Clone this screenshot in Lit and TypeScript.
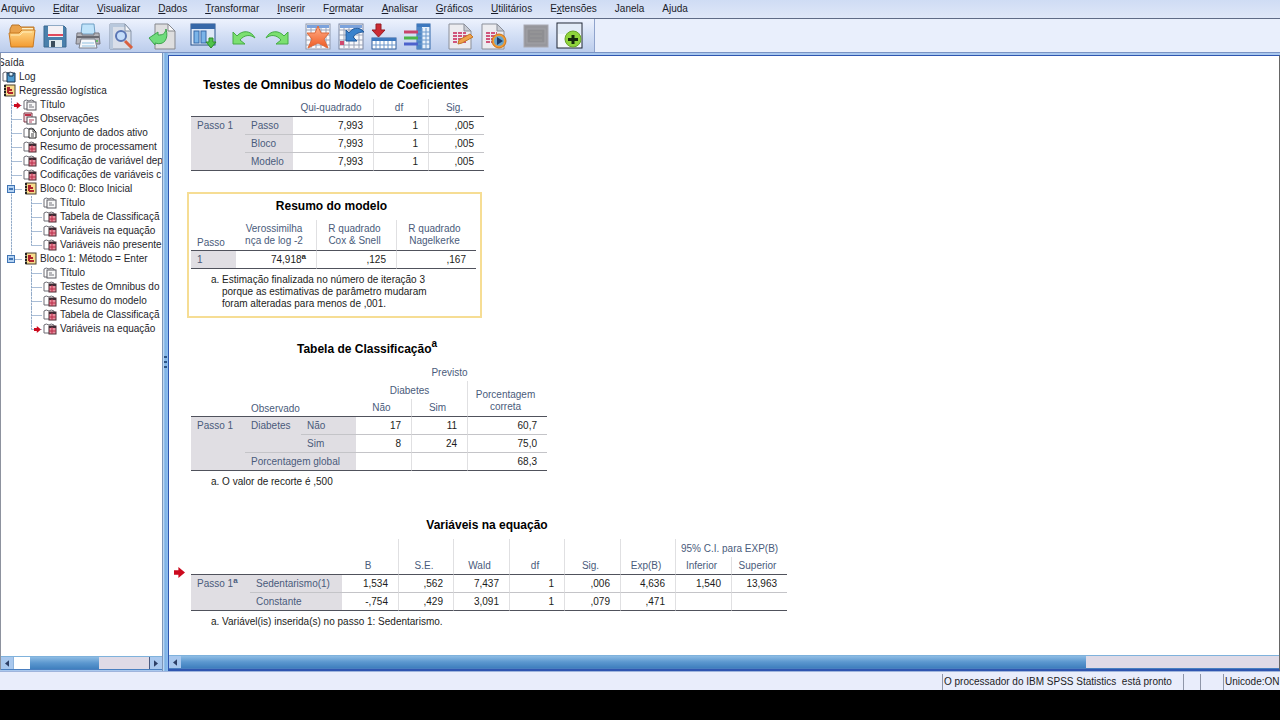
import { LitElement, html, svg, css, nothing } from "lit";
import { customElement } from "lit/decorators.js";

type IconName =
  | "open" | "save" | "print" | "preview" | "import" | "dialogs" | "undo" | "redo"
  | "star" | "goto" | "insert" | "vars" | "report" | "run" | "grey" | "plus";

const page = svg`<path d="M3 2H18L25 9V27H3Z" fill="#ececf0" stroke="#8b8f99"/><path d="M18 2V9H25Z" fill="#c9ccd4" stroke="#8b8f99"/>`;
const sheetLines = svg`<path d="M2 8H26M2 13H26M2 18H26M2 23H26M7 3V26M12 3V26M17 3V26M22 3V26" stroke="#9aa3b8" fill="none"/>`;

const icons: Record<IconName, unknown> = {
  open: svg`<path d="M2 7L4 3H11L13 5H26V12H2Z" fill="#e9a24b" stroke="#b8752b"/><path d="M14 6H25V9H14Z" fill="#fff3c9"/>
    <path d="M1 11H11L14 8H27L25 25H3Z" fill="url(#gFolder)" stroke="#c97a22"/><path d="M3 13H12L15 10H24" stroke="#ffe9b4" fill="none"/>`,
  save: svg`<path d="M3 4H23L25 6V25H3Z" fill="#4a80ac" stroke="#3b6890"/><rect x="7" y="4" width="15" height="11" fill="#f4f1f5"/>
    <path d="M7 13H22" stroke="#e04a5c" stroke-width="2"/><rect x="8" y="18" width="13" height="7" fill="#dfe9ee"/><rect x="10" y="19" width="4" height="6" fill="#3a4d5c"/>`,
  print: svg`<path d="M8 2H20L21 12H7Z" fill="#bfe3fa" stroke="#6f9fc4"/><path d="M3 11H8V13H20V11H25L26 22H2Z" fill="#b4b4ba" stroke="#76767e"/>
    <path d="M3 15H25" stroke="#6a6a72" stroke-width="2"/><path d="M7 17H21L23 26H5Z" fill="#f6f8fb" stroke="#7a808c"/><path d="M8 21H20M8 24H21" stroke="#8fbfe0" fill="none"/><circle cx="23" cy="19" r="1" fill="#4dc04d"/>`,
  preview: svg`<path d="M3 2H18L24 9V27H3Z" fill="#d9dfe9" stroke="#8694a8"/><path d="M3 2H18V5H6V27H3Z" fill="#b8c8dc"/><path d="M18 2V9H24Z" fill="#f4f6fa" stroke="#8694a8"/>
    <path d="M18 19L25 26" stroke="#d9603f" stroke-width="3"/><circle cx="14" cy="14" r="5" fill="#c3dcfa" stroke="#5a76b4" stroke-width="2"/>`,
  import: svg`<path d="M7 2H20L27 9V27H7Z" fill="#dededf" stroke="#85878d"/><path d="M20 2V9H27Z" fill="#f9f9fa" stroke="#85878d"/>
    <path d="M18 7C17 12 15 13 10 13V10L1 16L7 23V21C16 24 21 17 18 7Z" fill="#6fdc7c" stroke="#3ca34c"/>`,
  dialogs: svg`<rect x="2" y="2" width="24" height="21" fill="#dfe9f7" stroke="#27508a"/><rect x="2" y="2" width="24" height="5" fill="#3768a8"/>
    <rect x="5" y="9" width="5" height="12" fill="#7ab4e8" stroke="#3768a8"/><rect x="12" y="9" width="5" height="12" fill="#7ab4e8" stroke="#3768a8"/>
    <path d="M20 16H24V20H27L22 26L17 20H20Z" fill="#4fc34a" stroke="#2c8a2b"/>`,
  undo: svg`<path d="M3 10V22H15L10 18C14 13 20 12 25 16C21 8 12 8 7 14Z" fill="#7be070" stroke="#46ab46"/>`,
  redo: svg`<path d="M25 10V22H13L18 18C14 13 8 12 3 16C7 8 16 8 21 14Z" fill="#7be070" stroke="#46ab46"/>`,
  star: svg`<rect x="2" y="2" width="24" height="25" fill="#f8f8fb" stroke="#8e97ac"/>${sheetLines}<rect x="3" y="3" width="22" height="3" fill="#7ba2dc"/>
    <path d="M14 4L17 11H25L20 17L24 26L14 21L4 26L8 17L3 11H11Z" fill="url(#gStar)" stroke="#df6a3a"/>`,
  goto: svg`<rect x="2" y="2" width="24" height="25" fill="#f8f8fb" stroke="#7c87a2"/>${sheetLines}<rect x="3" y="3" width="22" height="3" fill="#7ba2dc"/><rect x="3" y="19" width="4" height="4" fill="#d0486e"/>
    <path d="M9 8V19H20L16 15C19 11 23 10 27 10C22 4 15 6 12 11Z" fill="#3b82cc" stroke="#235a9c"/>`,
  insert: svg`<rect x="2" y="16" width="24" height="11" fill="#fff" stroke="#2f5c9a"/><rect x="2" y="16" width="24" height="3" fill="#3d78be"/><path d="M2 23H26M6 19V27M10 19V27M14 19V27M18 19V27M22 19V27" stroke="#6d97cb"/>
    <path d="M6 2H11V8H15L8.500 15L2 8H6Z" fill="#cc2a33" stroke="#961c24"/>`,
  vars: svg`<rect x="14" y="2" width="13" height="25" fill="#e8f1fb" stroke="#2c65a8"/><rect x="14" y="2" width="13" height="3" fill="#3d78be"/><rect x="14" y="5" width="5" height="22" fill="#4d86c6"/><path d="M15 10H27M15 14H27M15 18H27M15 22H27M19 6V27M23 6V27" stroke="#6d9acd"/>
    <path d="M1 10H15" stroke="#c8446b" stroke-width="3"/><path d="M1 16H15" stroke="#4cb449" stroke-width="3"/><path d="M1 22H15" stroke="#4c62cc" stroke-width="3"/>`,
  report: svg`${page}<path d="M7 11H20M7 14H21M7 17H18M7 20H20" stroke="#d0557c" stroke-width="2" stroke-dasharray="4 1"/><path d="M13 18L24 12L27 15L16 21L12 22Z" fill="#f0a24a" stroke="#c27424"/>`,
  run: svg`${page}<path d="M7 11H18M7 14H16M7 17H14M7 20H13" stroke="#d0557c" stroke-width="2" stroke-dasharray="4 1"/><circle cx="20" cy="19" r="7" fill="#f09a34" stroke="#cc7416"/><circle cx="20" cy="19" r="5" fill="#6aa6cc"/><path d="M18 15L24 19L18 23Z" fill="#1e3f6c"/>`,
  grey: svg`<rect x="2" y="3" width="24" height="22" fill="#97979c" stroke="#a9a9b2"/><rect x="5" y="7" width="18" height="14" fill="#8e8e92" stroke="#a2a2a6"/><path d="M8 10H20M8 14H20M8 18H20" stroke="#999"/>`,
  plus: svg`<rect x="2" y="1" width="25" height="25" fill="#f3f7fc" stroke="#1c2434"/><rect x="3" y="2" width="23" height="10" fill="#e3ecf7"/>
    <circle cx="18" cy="17" r="8" fill="#8fd43c" stroke="#6aa52b"/><path d="M18 13V22M13 17.500H23" stroke="#14280c" stroke-width="3"/>`,
};

const toolGroups: { spaced?: boolean; items: [IconName, string][] }[] = [
  { items: [["open", "Abrir"], ["save", "Salvar"], ["print", "Imprimir"], ["preview", "Visualizar impressão"]] },
  { items: [["import", "Exportar"]] },
  { items: [["dialogs", "Diálogos recentes"]] },
  { items: [["undo", "Desfazer"], ["redo", "Refazer"]] },
  { items: [["star", "Ir para dados"], ["goto", "Ir para caso"], ["insert", "Ir para variável"], ["vars", "Variáveis"]] },
  { spaced: true, items: [["report", "Editar saída"], ["run", "Executar"]] },
  { spaced: true, items: [["grey", "Designar janela"], ["plus", "Adicionar"]] },
];

type TreeIcon = "log" | "book" | "title" | "notes" | "data" | "table";

const backBook = svg`<path d="M1 11V3Q3 1 6 3Q8 1 11 3V11Z" fill="#fff" stroke="#6c6c74"/>`;
const treeIcons: Record<TreeIcon, unknown> = {
  log: svg`${backBook}<path d="M5 3H13V12H5Z" fill="#4f9cd0" stroke="#14304c"/><path d="M7 3V6H11V3" fill="#d8eefa" stroke="#14304c"/>`,
  book: svg`<rect x="3" y="1" width="10" height="11" fill="#f8dc8c" stroke="#4a4030"/><path d="M3 1V12" stroke="#222" stroke-width="2" stroke-dasharray="2 1"/><path d="M5 4H8M6 4V9M6 6H10M6 9H11" fill="none" stroke="#b0242c" stroke-width="2"/>`,
  title: svg`${backBook}<rect x="4" y="4" width="9" height="8" fill="#f8f8f8" stroke="#5c5c64"/><path d="M6 7H9M6 9H11" stroke="#77777f"/>`,
  notes: svg`<path d="M1 10V1H9V10Z" fill="#f7dfe4" stroke="#7c3444"/><path d="M2 3H8" stroke="#c03048" stroke-width="2"/><rect x="4" y="5" width="9" height="7" fill="#fff" stroke="#4c4c54"/><path d="M6 8H11M6 10H9" stroke="#b0405c"/>`,
  data: svg`${backBook}<path d="M6 3H10L13 6V12H6Z" fill="#fff" stroke="#222"/><path d="M10 3V6H13M8 8H11M8 10H11" stroke="#444" fill="none"/>`,
  table: svg`${backBook}<rect x="6" y="4" width="7" height="8" fill="#e88c9c" stroke="#4c2c34"/><path d="M6 5H13" stroke="#3c2c34" stroke-width="2"/><path d="M9 5V12M6 9H13" stroke="#b82c48"/>`,
};

interface Node { label: string; icon: TreeIcon; current?: boolean; children?: Node[] }

const tree: Node[] = [
  { label: "Título", icon: "title", current: true },
  { label: "Observações", icon: "notes" },
  { label: "Conjunto de dados ativo", icon: "data" },
  { label: "Resumo de processament", icon: "table" },
  { label: "Codificação de variável dep", icon: "table" },
  { label: "Codificações de variáveis c", icon: "table" },
  {
    label: "Bloco 0: Bloco Inicial", icon: "book", children: [
      { label: "Título", icon: "title" },
      { label: "Tabela de Classificaçã", icon: "table" },
      { label: "Variáveis na equação", icon: "table" },
      { label: "Variáveis não presente", icon: "table" },
    ],
  },
  {
    label: "Bloco 1: Método = Enter", icon: "book", children: [
      { label: "Título", icon: "title" },
      { label: "Testes de Omnibus do", icon: "table" },
      { label: "Resumo do modelo", icon: "table" },
      { label: "Tabela de Classificaçã", icon: "table" },
      { label: "Variáveis na equação", icon: "table", current: true },
    ],
  },
];

const arrow = html`<svg class="arrow" viewBox="0 0 10 10" aria-hidden="true"><path d="M0 3H4V0L10 5L4 10V7H0Z" fill="#cc0a1e"/></svg>`;

@customElement("spss-menu")
class SpssMenu extends LitElement {
  static styles = css`
    :host { display: block; background: linear-gradient(#cfdcf4, #dfe7f8); border-bottom: 1px solid #5f6b86; }
    nav { display: flex; gap: 18px; padding: 0 1px; height: 18px; align-items: center; }
    button { all: unset; font: 10px/16px "Liberation Sans", sans-serif; color: #1a1c2a; white-space: nowrap; }
  `;
  // The "_" sign stands before the access key of each entry.
  entries = ["Arquivo", "_Editar", "_Visualizar", "_Dados", "_Transformar", "_Inserir", "F_ormatar", "_Analisar", "_Gráficos", "_Utilitários", "E_xtensões", "Janela", "Ajuda"];
  render() {
    return html`<nav>${this.entries.map((e) => {
      const i = e.indexOf("_");
      return html`<button>${i < 0 ? e : html`${e.slice(0, i)}<u>${e[i + 1]}</u>${e.slice(i + 2)}`}</button>`;
    })}</nav>`;
  }
}

@customElement("spss-toolbar")
class SpssToolbar extends LitElement {
  static styles = css`
    :host { display: flex; background: #e9effc; border-bottom: 1px solid #7a93c4; }
    .bar { display: flex; gap: 13px; padding: 3px 11px 2px 8px; background: linear-gradient(#edf2fd, #d3dff5 50%, #bccdec); border-right: 1px solid #8fa3cc; }
    .group { display: flex; gap: 5px; }
    .spaced { margin-left: 2px; }
    button { all: unset; width: 28px; height: 28px; }
    svg { display: block; width: 28px; height: 28px; }
  `;
  render() {
    return html`<div class="bar" role="toolbar">
      ${toolGroups.map((g) => html`<div class="group ${g.spaced ? "spaced" : ""}">
        ${g.items.map(([name, label]) => html`<button aria-label=${label}><svg viewBox="0 0 28 28">
          <defs>
            <linearGradient id="gFolder" x2="0" y2="1"><stop offset="0" stop-color="#ffd98a"/><stop offset="1" stop-color="#f39a30"/></linearGradient>
            <linearGradient id="gStar" x2="0" y2="1"><stop offset="0" stop-color="#ffb08c"/><stop offset="1" stop-color="#ef5a22"/></linearGradient>
          </defs>${icons[name]}</svg></button>`)}
      </div>`)}
    </div>`;
  }
}

@customElement("spss-scrollbar")
class SpssScrollbar extends LitElement {
  static properties = { kind: { type: String } };
  declare kind: string;
  static styles = css`
    :host { display: block; }
    .bar { display: flex; height: 12px; background: #dfdae6; border-top: 1px solid #7fb2dc; border-bottom: 1px solid #4a7fc0; }
    button { all: unset; width: 12px; display: flex; align-items: center; justify-content: center; background: #a9c8ee; }
    svg { width: 4px; height: 7px; }
    .thumb { background: linear-gradient(#8dbce4, #5b97cf 50%, #3f7fbe); }
    .side .rest { background: #fff; flex: 0 0 16px; border-left: 1px solid #8fb4dc; }
    .side .thumb { flex: 68; }
    .side .track { flex: 50; border-right: 1px solid #4a5a80; }
    .main .thumb { flex: 904; }
    .main .track { flex: 193; }
  `;
  render() {
    const side = this.kind === "side";
    return html`<div class="bar ${this.kind}">
      <button aria-label="Rolar para a esquerda"><svg viewBox="0 0 5 8"><path d="M5 0V8L0 4Z" fill="#2d3f66"/></svg></button>
      ${side ? html`<div class="rest"></div>` : nothing}
      <div class="thumb"></div><div class="track"></div>
      ${side ? html`<button aria-label="Rolar para a direita"><svg viewBox="0 0 5 8"><path d="M0 0V8L5 4Z" fill="#2d3f66"/></svg></button>` : nothing}
    </div>`;
  }
}

@customElement("spss-outline")
class SpssOutline extends LitElement {
  static styles = css`
    :host { display: flex; flex-direction: column; overflow: hidden; background: #fff; font: 10px/14px "Liberation Sans", sans-serif; color: #26262c; }
    .tree { flex: 1; min-height: 0; overflow: hidden; white-space: nowrap; padding-top: 3px; }
    .root { margin-left: -3px; }
    ul { list-style: none; margin: 0; padding: 0; }
    ul ul { padding-left: 20px; }
    .row { display: flex; align-items: center; gap: 2px; height: 14px; }
    .top { padding-left: 1px; }
    .branch > li {
      background: repeating-linear-gradient(#93abc8 0 2px, #d3dfec 2px 3px) 10px 0 / 1px 100% no-repeat,
        linear-gradient(#a9bdd6, #a9bdd6) 10px 7px / 11px 1px no-repeat;
    }
    .branch > li:last-child { background-size: 1px 7px, 11px 1px; }
    .gutter { flex: 0 0 20px; display: flex; justify-content: flex-end; }
    .gutter.toggle { justify-content: center; }
    .icon { flex: none; width: 15px; height: 14px; }
    .arrow { width: 7px; height: 7px; }
    button { all: unset; box-sizing: border-box; width: 8px; height: 8px; border: 1px solid #3f74b4; background: linear-gradient(#3f74b4, #3f74b4) 1px 2px / 4px 2px no-repeat #b4d2f2; }
  `;
  row(n: Node): unknown {
    return html`<li>
      <div class="row">
        <span class="gutter ${n.children ? "toggle" : ""}">${n.children ? html`<button aria-label="Recolher"></button>` : n.current ? arrow : nothing}</span>
        <svg class="icon" viewBox="0 0 15 14">${treeIcons[n.icon]}</svg><span>${n.label}</span>
      </div>
      ${n.children ? html`<ul class="branch">${n.children.map((c) => this.row(c))}</ul>` : nothing}
    </li>`;
  }
  render() {
    return html`<div class="tree">
        <div class="row root">Saída</div>
        <div class="row top"><svg class="icon" viewBox="0 0 15 14">${treeIcons.log}</svg><span>Log</span></div>
        <div class="row top"><svg class="icon" viewBox="0 0 15 14">${treeIcons.book}</svg><span>Regressão logística</span></div>
        <ul class="branch">${tree.map((n) => this.row(n))}</ul>
      </div>
      <spss-scrollbar kind="side"></spss-scrollbar>`;
  }
}

@customElement("spss-output")
class SpssOutput extends LitElement {
  static styles = css`
    :host { display: flex; flex-direction: column; overflow: hidden; background: #fff; font: 10px/12px "Liberation Sans", sans-serif; color: #1c1c20; }
    .doc { flex: 1; min-height: 0; overflow: hidden; display: flex; flex-direction: column; gap: 15px; align-items: flex-start; padding: 15px 5px 0; }
    .item { display: grid; grid-template-columns: 13px auto; align-items: center; }
    .spaced { margin-top: 2px; }
    .arrow { width: 11px; height: 11px; }
    figure { grid-column: 2; margin: 0; border: 2px solid transparent; padding: 4px 4px 4px 2px; }
    .selected { border-color: #f6dd94; padding-bottom: 6px; }
    figcaption { font-size: 12px; line-height: 16px; font-weight: bold; text-align: center; color: #000; margin-bottom: 6px; padding-right: 4px; }
    sup { font-size: 8px; line-height: 0; font-weight: bold; vertical-align: 4px; }
    figcaption sup { font-size: 10px; vertical-align: 6px; }
    table { border-collapse: separate; border-spacing: 0; table-layout: fixed; width: 1px; }
    th, td { box-sizing: border-box; height: 18px; padding: 1px 10px 0 6px; white-space: nowrap; line-height: 16px; border-bottom: 1px solid #c4c4c8; vertical-align: top; }
    td { text-align: right; }
    td + td, .v { border-left: 1px solid #e0e0e2; }
    th { font-weight: normal; color: #4a5b7b; text-align: left; }
    thead th { padding: 0 4px 0 0; text-align: center; vertical-align: bottom; border-bottom: 0; }
    thead .wrap { line-height: 12px; padding-bottom: 3px; }
    thead .l { text-align: left; padding-left: 6px; line-height: 14px; }
    thead .end { border-bottom: 1px solid #50525c; }
    tbody th { background: #e0dee3; }
    tbody tr:last-child > *, tbody .last { border-bottom-color: #50525c; }
    p { margin: 5px 0 0 31px; text-indent: -11px; }
    .w45 { width: 45px } .w48 { width: 48px } .w54 { width: 54px } .w55 { width: 55px } .w56 { width: 56px } .w59 { width: 59px } .w80 { width: 80px } .w92 { width: 92px }
    .model { height: 31px; }
  `;
  render() {
    return html`<div class="doc">
      <div class="item"><figure>
        <figcaption>Testes de Omnibus do Modelo de Coeficientes</figcaption>
        <table>
          <colgroup><col class="w54"><col class="w48"><col class="w80"><col class="w55"><col class="w56"></colgroup>
          <thead><tr><th class="end" colspan="2"></th><th class="end">Qui-quadrado</th><th class="end v">df</th><th class="end v">Sig.</th></tr></thead>
          <tbody>
            <tr><th class="last" rowspan="3">Passo 1</th><th>Passo</th><td>7,993</td><td>1</td><td>,005</td></tr>
            <tr><th>Bloco</th><td>7,993</td><td>1</td><td>,005</td></tr>
            <tr><th>Modelo</th><td>7,993</td><td>1</td><td>,005</td></tr>
          </tbody>
        </table>
      </figure></div>

      <div class="item"><figure class="selected">
        <figcaption>Resumo do modelo</figcaption>
        <table>
          <colgroup><col class="w45"><col class="w80"><col class="w80"><col class="w80"></colgroup>
          <thead><tr class="model"><th class="end l">Passo</th><th class="end wrap">Verossimilha<br>nça de log -2</th><th class="end v wrap">R quadrado<br>Cox &amp; Snell</th><th class="end v wrap">R quadrado<br>Nagelkerke</th></tr></thead>
          <tbody><tr><th>1</th><td>74,918<sup>a</sup></td><td>,125</td><td>,167</td></tr></tbody>
        </table>
        <p>a. Estimação finalizada no número de iteração 3<br>porque as estimativas de parâmetro mudaram<br>foram alteradas para menos de ,001.</p>
      </figure></div>

      <div class="item spaced"><figure>
        <figcaption>Tabela de Classificação<sup>a</sup></figcaption>
        <table>
          <colgroup><col class="w54"><col class="w56"><col class="w55"><col class="w55"><col class="w56"><col class="w80"></colgroup>
          <thead>
            <tr><th class="end" rowspan="3"></th><th class="end l" rowspan="3" colspan="2">Observado</th><th colspan="3">Previsto</th></tr>
            <tr><th colspan="2">Diabetes</th><th class="end v wrap" rowspan="2">Porcentagem<br>correta</th></tr>
            <tr><th class="end">Não</th><th class="end v">Sim</th></tr>
          </thead>
          <tbody>
            <tr><th class="last" rowspan="3">Passo 1</th><th rowspan="2">Diabetes</th><th>Não</th><td>17</td><td>11</td><td>60,7</td></tr>
            <tr><th>Sim</th><td>8</td><td>24</td><td>75,0</td></tr>
            <tr><th colspan="2">Porcentagem global</th><td></td><td></td><td>68,3</td></tr>
          </tbody>
        </table>
        <p>a. O valor de recorte é ,500</p>
      </figure></div>

      <div class="item spaced">${arrow}<figure>
        <figcaption>Variáveis na equação</figcaption>
        <table>
          <colgroup><col class="w59"><col class="w92"><col class="w56"><col class="w55"><col class="w56"><col class="w55"><col class="w56"><col class="w55"><col class="w56"><col class="w56"></colgroup>
          <thead>
            <tr><th class="end" colspan="2" rowspan="2"></th><th class="end" rowspan="2">B</th><th class="end v" rowspan="2">S.E.</th><th class="end v" rowspan="2">Wald</th><th class="end v" rowspan="2">df</th><th class="end v" rowspan="2">Sig.</th><th class="end v" rowspan="2">Exp(B)</th><th class="v" colspan="2">95% C.I. para EXP(B)</th></tr>
            <tr><th class="end v">Inferior</th><th class="end v">Superior</th></tr>
          </thead>
          <tbody>
            <tr><th class="last" rowspan="2">Passo 1<sup>a</sup></th><th>Sedentarismo(1)</th><td>1,534</td><td>,562</td><td>7,437</td><td>1</td><td>,006</td><td>4,636</td><td>1,540</td><td>13,963</td></tr>
            <tr><th>Constante</th><td>-,754</td><td>,429</td><td>3,091</td><td>1</td><td>,079</td><td>,471</td><td></td><td></td></tr>
          </tbody>
        </table>
        <p>a. Variável(is) inserida(s) no passo 1: Sedentarismo.</p>
      </figure></div>
    </div>
    <spss-scrollbar kind="main"></spss-scrollbar>`;
  }
}

@customElement("app-root")
class AppRoot extends LitElement {
  static styles = css`
    :host { display: flex; flex-direction: column; box-sizing: border-box; height: 100vh; padding-bottom: 30px; background: #000; overflow: hidden; font: 10px/16px "Liberation Sans", sans-serif; color: #1c1c24; }
    .work { flex: 1; min-height: 0; display: grid; grid-template-columns: 162px 6px 1fr; background: #a9c8ee; border-bottom: 1px solid #9fb4dc; }
    spss-outline { border-left: 1px solid #8d929e; margin-bottom: 1px; }
    .split { display: flex; flex-direction: column; align-items: center; justify-content: center; gap: 3px; background: linear-gradient(90deg, #cfe4f8, #7cb0e4 40%, #8fc0ee); border-left: 1px solid #7d96b8; }
    .split i { width: 3px; height: 2px; background: #2c5488; }
    spss-output { border: solid #2f56b0; border-width: 1px 1px 2px; border-right-color: #666; margin-top: 2px; }
    .status { display: flex; justify-content: flex-end; gap: 1px; padding-top: 2px; background: #e9edfb; }
    .status span { flex: none; box-sizing: border-box; width: 16px; padding-left: 1px; border-left: 1px solid #8f96a8; white-space: pre; }
    .status .message { width: 240px; }
    .status .blank { width: 22px; }
    .status .code { width: 57px; }
  `;
  render() {
    return html`<spss-menu></spss-menu><spss-toolbar></spss-toolbar>
      <div class="work"><spss-outline></spss-outline><div class="split"><i></i><i></i><i></i></div><spss-output></spss-output></div>
      <footer class="status"><span class="message">O processador do IBM SPSS Statistics  está pronto</span><span></span><span class="blank"></span><span class="code">Unicode:ON</span></footer>`;
  }
}
